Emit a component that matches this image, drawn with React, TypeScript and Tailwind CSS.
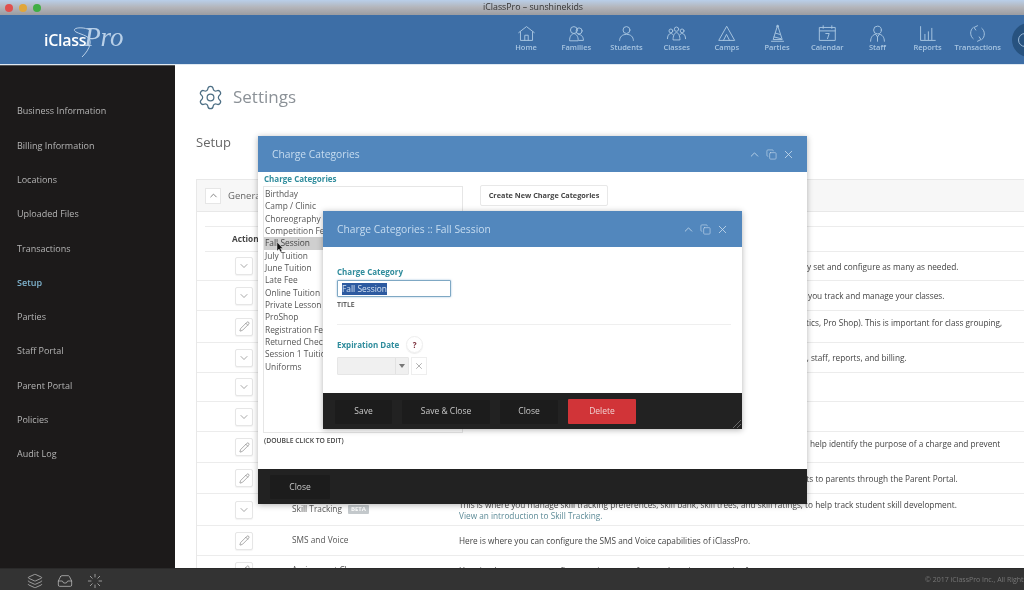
import React from "react";
import { ChevronDown, ChevronUp, X, Pencil, Settings, Layers, Inbox, Loader, Copy } from "lucide-react";

const S = ({ children }: { children: React.ReactNode }) => (
  <svg width="21" height="19" viewBox="0 0 24 22" fill="none" stroke="#a9c6e2" strokeWidth="1.1" strokeLinejoin="round" strokeLinecap="round">{children}</svg>
);

const navItems: { label: string; icon: React.ReactNode }[] = [
  { label: "Home", icon: <S><path d="M3 10 12 3l9 7" /><path d="M5 9v10h14V9" /><path d="M10 19v-6h4v6" /></S> },
  { label: "Families", icon: <S><circle cx="9" cy="7" r="4" /><circle cx="15" cy="8" r="3.5" /><path d="M4 19c0-5 2-7 5-8 3 1 5 3 5 8z" /><path d="M14 12c3 0 6 2 6 7h-5" /></S> },
  { label: "Students", icon: <S><circle cx="12" cy="7" r="4" /><path d="M4 19c0-4 3-7 8-7s8 3 8 7" /></S> },
  { label: "Classes", icon: <S><circle cx="12" cy="6" r="2.5" /><circle cx="5.5" cy="8" r="2.2" /><circle cx="18.5" cy="8" r="2.2" /><path d="M8 18c0-4 1.500-8 4-8s4 4 4 8z" /><path d="M1.500 17c0-3 1.500-6 4-6 1 0 2 .5 2.500 1.500" /><path d="M22.500 17c0-3-1.500-6-4-6-1 0-2 .5-2.500 1.500" /></S> },
  { label: "Camps", icon: <S><path d="M12 3 3 19h18z" /><path d="M8.500 19 12 12l3.500 7" /></S> },
  { label: "Parties", icon: <S><path d="M12 2 7 18h10z" /><circle cx="12" cy="2.500" r="1" /><path d="M9.500 10.500 14.500 12M8 15l8 2" /><path d="M5 20h14" /></S> },
  { label: "Calendar", icon: <S><rect x="3" y="4" width="18" height="15" /><path d="M3 8h18M7 2v3M17 2v3" /><path d="M10 11h4l-2 6" /></S> },
  { label: "Staff", icon: <S><circle cx="12" cy="7" r="4.500" /><path d="M4 20c0-5 3-8 6-8l2 3 2-3c3 0 6 3 6 8" /><path d="M12 15v5" /></S> },
  { label: "Reports", icon: <S><path d="M4 3v16h17" /><path d="M9 18v-6M13 18V9M17 18V5" /></S> },
  { label: "Transactions", icon: <S><path d="M7 4C3 7 3 14 7 17" /><path d="M17 18c4-3 4-10 0-13" /><path d="M12 2 8 4l2 3" /><path d="M12 20l4-2-2-3" /></S> },
];

const sideItems = ["Business Information", "Billing Information", "Locations", "Uploaded Files", "Transactions", "Setup", "Parties", "Staff Portal", "Parent Portal", "Policies", "Audit Log"];

const categories = ["Birthday", "Camp / Clinic", "Choreography", "Competition Fee", "Fall Session", "July Tuition", "June Tuition", "Late Fee", "Online Tuition", "Private Lesson", "ProShop", "Registration Fee", "Returned Check", "Session 1 Tuition", "Uniforms"];

function ActionBtn({ kind }: { kind: "down" | "edit" }) {
  return (
    <div className="w-[18px] h-[18px] border border-[#e6e6e6] rounded-[2px] bg-white flex items-center justify-center shrink-0 shadow-[0_1px_1px_rgba(0,0,0,0.05)]">
      {kind === "down" ? <ChevronDown size={12} strokeWidth={1.3} color="#777" /> : <Pencil size={11} strokeWidth={1.2} color="#666" />}
    </div>
  );
}

function Row({ h, kind, name, children }: { h: string; kind: "down" | "edit"; name?: React.ReactNode; children?: React.ReactNode }) {
  return (
    <div className={`${h} border-b border-[#ececec] flex items-center pl-[38px] shrink-0`}>
      <ActionBtn kind={kind} />
      <div className="w-[206px] pl-[39px] shrink-0 text-[#555] flex items-center gap-[6px]">{name}</div>
      <div className="text-[#444] whitespace-nowrap leading-[11px] flex-1 min-w-0">{children}</div>
    </div>
  );
}

function WinControls() {
  return (
    <div className="flex items-center gap-[5px] text-[#c9dcee]">
      <ChevronUp size={13} strokeWidth={1.5} />
      <Copy size={11} strokeWidth={1.3} />
      <X size={13} strokeWidth={1.5} />
    </div>
  );
}

function DarkBtn({ w, children }: { w: string; children: React.ReactNode }) {
  return <div className={`${w} h-[24px] bg-[#1c1c1c] text-[#c8c8c8] text-[8.500px] flex items-center justify-center rounded-[1px]`}>{children}</div>;
}

export default function App() {
  return (
    <div className="relative w-[1024px] h-[590px] overflow-hidden bg-white flex flex-col blur-[0.4px]" style={{ fontFamily: '"Open Sans", sans-serif' }}>
      {/* macOS title bar */}
      <div className="h-[15px] shrink-0 bg-gradient-to-b from-[#b9cfe9] via-[#b3b4b9] to-[#9b9ca1] flex items-center">
        <div className="flex gap-[6px] pl-[5px]">
          <div className="w-[8px] h-[8px] rounded-full bg-[#e0504e]" />
          <div className="w-[8px] h-[8px] rounded-full bg-[#e0a63a]" />
          <div className="w-[8px] h-[8px] rounded-full bg-[#3fae45]" />
        </div>
        <div className="flex-1 text-center text-[8.800px] text-[#333] pl-[1px] leading-[15px]">iClassPro – sunshinekids</div>
      </div>

      {/* header */}
      <div className="h-[49px] shrink-0 bg-[#3d6ea6] flex items-center relative">
        <div className="ml-[44px] relative w-[90px] h-[40px] flex items-center">
          <span className="text-white text-[16px] font-semibold tracking-[-0.3px]">iClass</span>
          <span className="text-[#b9d0e8] text-[27px] italic font-light -ml-[2px] -mt-[4px]" style={{ fontFamily: '"Liberation Serif", serif' }}>Pro</span>
          <svg className="absolute left-[20px] top-[4px]" width="50" height="36" viewBox="0 0 50 36" fill="none" stroke="#b9d0e8" strokeWidth="1">
            <path d="M26 6C18 2 6 4 12 8c6 3 16 4 14 12-1 5-4 9-8 13" />
          </svg>
        </div>
        <div className="absolute left-[501px] top-[9px] flex">
          {navItems.map((n) => (
            <div key={n.label} className="w-[50.200px] flex flex-col items-center">
              <div className="h-[18px] flex items-center">{n.icon}</div>
              <div className="text-[7.500px] text-[#a9c6e2] font-semibold leading-[10px] whitespace-nowrap">{n.label}</div>
            </div>
          ))}
        </div>
        <div className="absolute left-[1012px] top-[8px] w-[34px] h-[34px] rounded-full bg-[#27527f] overflow-hidden flex items-center justify-center">
          <div className="w-[14px] h-[14px] rounded-full border border-[#9cbad8] -ml-[8px]" />
        </div>
      </div>

      {/* body */}
      <div className="flex-1 min-h-0 flex border-t border-[#dfe9f2]">
        <div className="w-[175px] shrink-0 bg-[#1c1a1a] pl-[17px] pt-[28px] flex flex-col border-t border-[#555]">
          {sideItems.map((s) => (
            <div key={s} className={`h-[34.300px] flex items-center text-[9px] shrink-0 ${s === "Setup" ? "text-[#7fb4cf] font-semibold" : "text-[#b5b5b5]"}`}>{s}</div>
          ))}
        </div>
        <div className="flex-1 min-w-0 overflow-hidden flex flex-col pl-[21px]">
          <div className="h-[62px] shrink-0 flex items-center gap-[9px] pt-[2px] pl-[1px]">
            <Settings size={27} strokeWidth={1.100} color="#4d6f85" />
            <span className="text-[17px] text-[#8b9197]">Settings</span>
          </div>
          <div className="h-[52px] shrink-0 text-[13px] text-[#666] pt-[6px]">Setup</div>
          <div className="border-l border-t border-[#e8e8e8] flex flex-col text-[8.250px] flex-1 min-h-0">
            <div className="h-[32px] shrink-0 bg-[#f7f7f7] border-b border-[#e8e8e8] flex items-center pl-[8px] gap-[7px]">
              <div className="w-[16px] h-[16px] border border-[#e6e6e6] bg-white flex items-center justify-center"><ChevronUp size={11} color="#777" /></div>
              <span className="text-[9.500px] text-[#666] pt-[1px]">General</span>
            </div>
            <div className="h-[14px] shrink-0" />
            <div className="h-[26px] shrink-0 ml-[8px] border-y border-[#ececec] flex items-center pl-[27px] font-bold text-[#444]">Action</div>
            <Row h="h-[29px]" kind="down"><span className="pl-[319px]">You may set and configure as many as needed.</span></Row>
            <Row h="h-[30px]" kind="down"><span className="pl-[349px]">you track and manage your classes.</span></Row>
            <Row h="h-[32px]" kind="edit"><span className="pl-[326px] block -mt-[9px]">Statistics, Pro Shop). This is important for class grouping,</span></Row>
            <Row h="h-[30px]" kind="down"><span className="pl-[330px]">ages, staff, reports, and billing.</span></Row>
            <Row h="h-[29px]" kind="down" />
            <Row h="h-[30px]" kind="down" />
            <Row h="h-[31px]" kind="edit"><span className="pl-[351px] block -mt-[8px]">help identify the purpose of a charge and prevent</span></Row>
            <Row h="h-[31px]" kind="edit"><span className="pl-[311px]">statements to parents through the Parent Portal.</span></Row>
            <Row h="h-[32px]" kind="down" name={<><span className="text-[8.300px]">Skill Tracking</span><span className="bg-[#c4c9cc] text-white text-[6px] font-bold px-[3px] rounded-[1px] leading-[9px]">BETA</span></>}>
              <div>This is where you manage skill tracking preferences, skill bank, skill trees, and skill ratings, to help track student skill development.</div>
              <div className="text-[#5d8b97]">View an introduction to Skill Tracking.</div>
            </Row>
            <Row h="h-[30px]" kind="edit" name={<span className="text-[8.300px]">SMS and Voice</span>}>Here is where you can configure the SMS and Voice capabilities of iClassPro.</Row>
            <Row h="h-[30px]" kind="edit" name={<span className="text-[8.300px]">Assignment Classes</span>}>Here is where you can configure assignment of general session properties for</Row>
          </div>
        </div>
      </div>

      {/* footer */}
      <div className="absolute left-0 right-0 bottom-0 h-[22px] bg-[#333333] border-t border-[#2a2a2a] flex items-center">
        <div className="flex items-center gap-[14px] pl-[27px] pt-[2px] text-[#b5b5b5]">
          <Layers size={16} strokeWidth={1.2} />
          <Inbox size={16} strokeWidth={1.2} />
          <Loader size={16} strokeWidth={1.2} />
        </div>
        <div className="absolute left-[925px] top-[6px] text-[7px] text-[#777] whitespace-nowrap">© 2017 iClassPro Inc., All Rights Reserved</div>
      </div>

      {/* outer window */}
      <div className="absolute left-[258px] top-[136px] w-[549px] h-[368px] bg-white flex flex-col shadow-[0_1px_6px_rgba(0,0,0,0.3)]">
        <div className="h-[36px] shrink-0 bg-[#5287bd] flex items-center justify-between pl-[14px] pr-[12px] pt-[1px]">
          <span className="text-[10.300px] text-[#c6dcf0]">Charge Categories</span>
          <WinControls />
        </div>
        <div className="flex-1 min-h-0 flex pl-[5px] relative">
          <div className="w-[205px]">
            <div className="text-[8px] font-bold text-[#2f8c9c] leading-[11px] pl-[1px] pt-[1px]">Charge Categories</div>
            <div className="w-[200px] h-[247px] border border-[#e6e6e6] text-[8.400px] text-[#555] mt-[2px] pt-[1px] overflow-hidden">
              {categories.map((c) => (
                <div key={c} className={`h-[12.350px] leading-[12.350px] pl-[1px] whitespace-nowrap ${c === "Fall Session" ? "bg-[#cfcfcf] text-[#444]" : ""}`}>{c}</div>
              ))}
            </div>
            <div className="text-[6.800px] font-semibold text-[#444] pl-[1px] pt-[3px]">(DOUBLE CLICK TO EDIT)</div>
          </div>
          <div className="ml-[12px] mt-[13px] w-[128px] h-[21px] border border-[#e8e8e8] rounded-[2px] flex items-center justify-center text-[7.300px] font-bold text-[#444]">Create New Charge Categories</div>
          <svg className="absolute left-[18px] top-[70px]" width="9" height="12" viewBox="0 0 9 12"><path d="M1 0v9l2-2 1.500 3 1.500-.7L4.500 6.500H7z" fill="#111" stroke="#fff" strokeWidth="0.4" /></svg>
        </div>
        <div className="h-[35px] shrink-0 bg-[#222222] flex items-center pl-[12px] pt-[1px]">
          <DarkBtn w="w-[60px]">Close</DarkBtn>
        </div>
      </div>

      {/* inner window */}
      <div className="absolute left-[323px] top-[211px] w-[419px] h-[218px] bg-white flex flex-col shadow-[0_1px_6px_rgba(0,0,0,0.3)]">
        <div className="h-[36px] shrink-0 bg-[#5287bd] flex items-center justify-between pl-[14px] pr-[13px] pt-[1px]">
          <span className="text-[10.300px] text-[#c6dcf0]">Charge Categories :: Fall Session</span>
          <WinControls />
        </div>
        <div className="flex-1 min-h-0 flex flex-col pl-[14px] pr-[11px] pt-[19px]">
          <div className="text-[8px] font-bold text-[#2f8c9c] leading-[11px]">Charge Category</div>
          <div className="w-[114px] h-[17px] mt-[3px] border border-[#7fa8c4] rounded-[1px] bg-white flex items-center pl-[4px] shadow-[0_0_2px_rgba(80,140,190,0.6)]">
            <span className="bg-[#2d5aa0] text-[#d4e2f2] text-[8.400px] leading-[12px]">Fall Session</span>
          </div>
          <div className="text-[7px] font-semibold text-[#444] pt-[3px] leading-[9px]">TITLE</div>
          <div className="border-b border-[#efefef] h-[16px]" />
          <div className="flex items-center gap-[7px] mt-[11px]">
            <span className="text-[8px] font-bold text-[#2f8c9c]">Expiration Date</span>
            <span className="w-[17px] h-[17px] rounded-full border border-[#eee] flex items-center justify-center text-[8px] font-bold text-[#7a2e3a] shadow-[0_1px_1px_rgba(0,0,0,0.08)]">?</span>
          </div>
          <div className="flex items-center gap-[2px] mt-[4px]">
            <div className="w-[72px] h-[18px] bg-[#f0f0f0] border border-[#e6e6e6] rounded-[1px] flex items-center justify-end pr-[3px]">
              <div className="border-l border-[#e2e2e2] h-full flex items-center pl-[3px]">
                <div className="w-0 h-0 border-x-[3px] border-x-transparent border-t-[4px] border-t-[#777]" />
              </div>
            </div>
            <div className="w-[16px] h-[18px] border border-[#eee] flex items-center justify-center"><X size={10} strokeWidth={1.2} color="#666" /></div>
          </div>
        </div>
        <div className="h-[36px] shrink-0 bg-[#222222] flex items-center pl-[12px] gap-[10px] pt-[1px] relative">
          <DarkBtn w="w-[57px]">Save</DarkBtn>
          <DarkBtn w="w-[88px]">Save &amp; Close</DarkBtn>
          <DarkBtn w="w-[58px]">Close</DarkBtn>
          <div className="w-[68px] h-[25px] bg-[#d13438] text-[#f0d0d0] text-[8.500px] flex items-center justify-center rounded-[1px]">Delete</div>
          <svg className="absolute right-[1px] bottom-[1px]" width="8" height="8" viewBox="0 0 8 8" stroke="#888" strokeWidth="0.7"><path d="M0 8 8 0M4 8l4-4" /></svg>
        </div>
      </div>
    </div>
  );
}
